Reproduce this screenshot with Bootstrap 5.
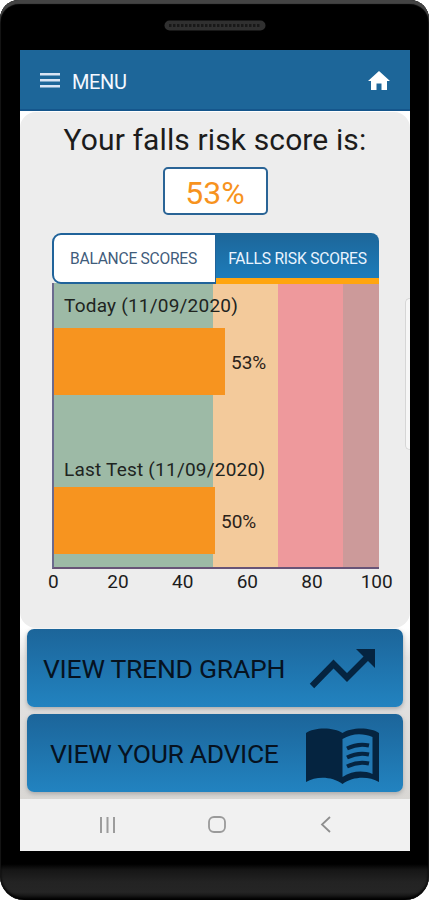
<!DOCTYPE html>
<html lang="en">
<head>
<meta charset="utf-8">
<meta name="viewport" content="width=device-width, initial-scale=1">
<title>Falls risk score</title>
<link rel="stylesheet" href="https://cdn.jsdelivr.net/npm/bootstrap@5.3.0/dist/css/bootstrap.min.css">
<style>
body{font-family:Roboto,"Liberation Sans",sans-serif;background:#fff;color:#1c1c1c;line-height:1}
.phone{width:429px;height:900px;border-radius:19px 19px 24px 24px;padding:0 19px 0 20px;
  background:linear-gradient(#000 0 864px,#161616 870px,#232323 882px,#252525 892px,#0a0a0a 900px);
  box-shadow:inset 0 4px 1px #444,inset -1px 0 1px #111,inset 1px 0 1px #111,inset 0 -2px 3px #000}
.earpiece{height:50px;padding-top:20px}
.earpiece svg{display:block}
.screen{height:801px;background:#fff}
.topbar{height:61px;background:#1d6699;border-bottom:2px solid #15568c;padding:2px 20px 0 20px;color:#f4f8ff}
.menu-text{font-size:20px;letter-spacing:-.4px;margin-left:12px;padding-top:2px}
.score-panel{height:516px;background:#ededed;border-radius:16px;margin-top:1px;padding:11px 31px 0 32px}
.edge-handle{right:0;top:186px;width:5px;height:152px;background:#f6f6f6;border:1px solid #d6d6d6;border-right:0;border-radius:5px 0 0 5px}
.heading{font-size:30px;letter-spacing:.12px;line-height:34px;font-weight:400;white-space:nowrap;margin-left:-1px}
.score-box{width:105px;height:48px;margin-top:10px;border:2px solid #2a6496;border-radius:5px;color:#f7931e;font-size:32px;padding:4px 1px 0 0;background:#fff}
.tabs{height:51px;margin-top:18px;position:relative;z-index:1}
.tab-a{width:164px;border:2px solid #20639a;border-right-width:1px;border-radius:9px 0 0 9px;background:#fff;color:#3f5c7b;font-size:15.600px;letter-spacing:-.25px;padding:3px 2px 0 0}
.tab-b{width:163px;border-radius:0 8px 0 0;background:linear-gradient(#1d6699,#1d7cba);border-bottom:6px solid #ffa50f;color:#eaf4ff;font-size:15.600px;letter-spacing:-.2px;padding-top:9px}
.plot{height:286px;margin-top:-1px;border-left:2px solid #6b6a8e;border-bottom:2px solid #685477;
 background:linear-gradient(90deg,#9dbaa6 0 159.5px,#f3ca9b 159.5px 224.5px,#ee999c 224.5px 289.5px,#cc9a9a 289.5px)}
.series-name{font-size:19px;letter-spacing:.22px;padding-left:10px;color:#20241f;white-space:nowrap;line-height:20px}
.first-name{margin-top:13px}
.second-name{margin-top:65px}
.first-bar{margin-top:12px}
.second-bar{margin-top:7px}
.value-bar{height:67px;background:#f7941f}
.value-text{font-size:19px;margin-left:6px;padding-top:2px;color:#2a2219}
.axis{width:388px;margin-left:-31px;font-size:19px;padding-top:3px}
.axis span{width:64.8px;text-align:center}
.actions{padding:1px 7px 0;height:171px;background:linear-gradient(#fff,#e4e4e4 30px,#d9d7d4)}
.act{width:376px;height:78px;border:0;border-radius:7px;background:linear-gradient(#1c659a,#2283c0);box-shadow:0 2px 4px #aaa;color:#06121f;font-size:26.5px;line-height:1}
.act-a{margin-left:16px;letter-spacing:-.25px;padding-top:3px}
.act-b{margin-left:23px;letter-spacing:-.33px;padding-top:3px}
.trend-icon{margin-right:27px;margin-top:2px}
.book-icon{margin-right:24px;margin-top:5px}
.navkeys{height:53px;background:#f1f1f1;padding:0 78px 2px 78px}
</style>
</head>
<body>
<div class="phone overflow-hidden">
  <div class="earpiece d-flex justify-content-center">
    <svg width="102" height="11"><rect x=".5" y=".5" width="101" height="10" rx="5" fill="#303030"/><path d="M5 5.500H97" stroke="#181818" stroke-width="3" stroke-dasharray="2.500 1.500"/></svg>
  </div>
  <main class="screen overflow-hidden">
    <nav class="topbar d-flex align-items-center">
      <svg width="20" height="15" fill="#d9e5f5"><path d="M0 0h20v2.500H0zM0 6h20v2.500H0zM0 12h20v2.500H0z"/></svg>
      <span class="menu-text">MENU</span>
      <svg class="ms-auto" width="22" height="20" viewBox="0 0 22 20" fill="#fff"><path d="M11 0 22 10h-3v9h-5.500V12.500h-5V19H3V10H0z"/></svg>
    </nav>
    <section class="score-panel position-relative">
      <div class="edge-handle position-absolute"></div>
      <h1 class="heading text-center mb-0">Your falls risk score is:</h1>
      <div class="score-box d-flex align-items-center justify-content-center mx-auto">53%</div>
      <div class="tabs d-flex">
        <div class="tab-a d-flex align-items-center justify-content-center">BALANCE SCORES</div>
        <div class="tab-b d-flex align-items-center justify-content-center">FALLS RISK SCORES</div>
      </div>
      <div class="plot d-flex flex-column">
        <div class="series-name first-name">Today (11/09/2020)</div>
        <div class="first-bar d-flex align-items-center"><div class="value-bar" style="width:171px"></div><span class="value-text">53%</span></div>
        <div class="series-name second-name">Last Test (11/09/2020)</div>
        <div class="second-bar d-flex align-items-center"><div class="value-bar" style="width:161px"></div><span class="value-text">50%</span></div>
      </div>
      <div class="axis d-flex"><span>0</span><span>20</span><span>40</span><span>60</span><span>80</span><span>100</span></div>
    </section>
    <section class="actions d-flex flex-column">
      <button class="act d-flex align-items-center p-0"><span class="act-a">VIEW TREND GRAPH</span>
        <svg class="trend-icon ms-auto" width="67" height="40" viewBox="0 0 67 40"><path d="M3 37 24.500 15 38 28.500 59 7.500" fill="none" stroke="#052440" stroke-width="6.200"/><path d="M47 0H66V19z" fill="#052440"/></svg>
      </button>
      <button class="act d-flex align-items-center p-0 mt-auto mb-auto"><span class="act-b">VIEW YOUR ADVICE</span>
        <svg class="book-icon ms-auto" width="73" height="56" viewBox="0 0 73 56"><path d="M0 5C8-1 28-1 36.500 5 45-1 65-1 73 5V54C63 48 47 48 36.500 56 26 48 10 48 0 54z" fill="#052440"/><path d="M36.500 11C46 5 57 5 66.500 9V46C57 42 46 43 36.500 49z" fill="#2279b4"/><path d="M41 20.500Q52 15 63 17.500M41 29.500Q52 24 63 26.500M41 38.500Q52 33 63 35.500" fill="none" stroke="#052440" stroke-width="4"/></svg>
      </button>
    </section>
    <nav class="navkeys d-flex align-items-center justify-content-between">
      <svg width="18" height="16" fill="none" stroke="#9c9c9c" stroke-width="2"><path d="M3 0V16M9.500 0V16M16 0V16"/></svg>
      <svg width="18" height="17" fill="none" stroke="#9a9a9a" stroke-width="1.800"><rect x="1" y="1" width="16" height="15" rx="5"/></svg>
      <svg width="14" height="17" fill="none" stroke="#8e8e8e" stroke-width="1.800"><path d="M12 1 4 8.500 12 16"/></svg>
    </nav>
  </main>
</div>
<script src="https://cdn.jsdelivr.net/npm/bootstrap@5.3.0/dist/js/bootstrap.bundle.min.js"></script>
</body>
</html>
